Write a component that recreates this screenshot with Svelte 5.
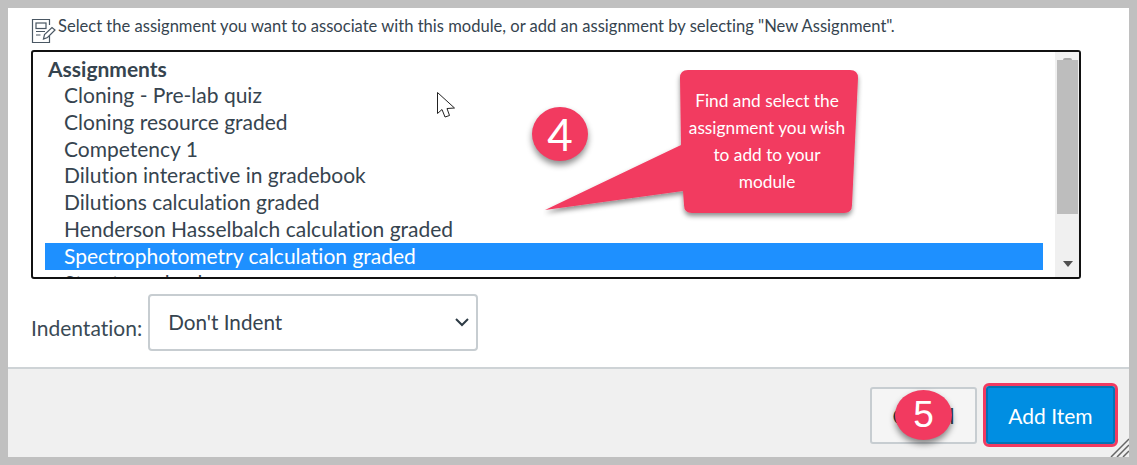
<script>
  const items = [
    'Cloning - Pre-lab quiz',
    'Cloning resource graded',
    'Competency 1',
    'Dilution interactive in gradebook',
    'Dilutions calculation graded',
    'Henderson Hasselbalch calculation graded'
  ];
</script>

<div class="frame">
  <main class="body">
    <p class="intro">
      <svg class="note" width="25" height="27" viewBox="0 0 25 27" fill="none" stroke="#4a5763" stroke-width="1.2">
        <path d="M18.500 8V2.500H1.500V25.500H18.500V19" />
        <rect x="5" y="6" width="10" height="5.500" />
        <path d="M5 14.500h9M5 18h4.500" />
        <path d="M12.500 22l1-4.500 7.500-7 3 2.500-7.500 7.500z" />
      </svg>
      <span>Select the assignment you want to associate with this module, or add an assignment by selecting "New Assignment".</span>
    </p>

    <div class="listbox">
      <div class="list">
        <div class="group">Assignments</div>
        {#each items as item}
          <div class="opt">{item}</div>
        {/each}
        <div class="opt sel">Spectrophotometry calculation graded</div>
        <div class="opt">Structure check</div>
      </div>
      <div class="scroll">
        <div class="up"></div>
        <div class="thumb"></div>
        <div class="down"></div>
      </div>
    </div>

    <div class="indent">
      <span class="lbl">Indentation:</span>
      <div class="select">
        <span>Don't Indent</span>
        <svg width="14" height="9" viewBox="0 0 14 9" fill="none" stroke="#2d3b45" stroke-width="2"><path d="M1 1l6 6 6-6" /></svg>
      </div>
    </div>
  </main>

  <footer class="foot">
    <button class="btn cancel">Cancel</button>
    <div class="focus"><button class="btn add">Add Item</button></div>
    <svg class="grip" width="20" height="20" viewBox="0 0 20 20" stroke="#666" stroke-width="1.500"><path d="M20 2L2 20M20 8L8 20M20 14L14 20" /></svg>
  </footer>

  <svg class="cursor" width="22" height="32" viewBox="0 0 22 32">
    <path d="M1.500 1.500V22.500L6 18.500L9 26L13.500 24.500L11 17.500L18.500 17Z" fill="#fff" stroke="#222" stroke-width="1" />
  </svg>

  <div class="badge four">4</div>

  <div class="callout">
    <svg width="320" height="160" viewBox="0 0 320 160">
      <defs>
        <filter id="sh" x="-10%" y="-10%" width="120%" height="125%">
          <feDropShadow dx="0" dy="3" stdDeviation="2.500" flood-color="#000" flood-opacity="0.45" />
        </filter>
      </defs>
      <path d="M137 8Q137 0 145 0H307Q315 0 315 8L309 135Q309 143 301 143H149Q141 143 141 135L140 121L2 140L138 75Z" fill="#f23a60" filter="url(#sh)" />
    </svg>
    <div class="ctext">Find and select the assignment you wish to add to your module</div>
  </div>

  <div class="badge five">5</div>
</div>

<style>
  :global(body) {
    margin: 0;
    background: #c0c0c0;
  }
  .frame {
    position: relative;
    box-sizing: border-box;
    width: 1137px;
    height: 465px;
    padding: 8px;
    display: flex;
    flex-direction: column;
    overflow: hidden;
    font-family: Lato, sans-serif;
    font-variant-ligatures: none;
    color: #36444f;
  }
  .body {
    height: 359px;
    box-sizing: border-box;
    background: #fff;
    padding: 8px 48px 0 23px;
    display: flex;
    flex-direction: column;
  }
  .intro {
    margin: 0;
    height: 34px;
    display: flex;
    align-items: flex-start;
    gap: 2px;
    font-size: 16.560px;
    line-height: 21px;
    white-space: nowrap;
  }
  .note { flex: none; margin-top: 1px; }
  .listbox {
    box-sizing: border-box;
    height: 229px;
    border: 2px solid #111;
    border-radius: 3px;
    display: flex;
    overflow: hidden;
  }
  .list {
    flex: 1;
    padding: 4px 12px 0 12px;
    overflow: hidden;
    font-size: 21px;
    line-height: 26.800px;
  }
  .group { font-weight: 700; padding-left: 3px; height: 26px; }
  .opt { padding-left: 19px; height: 26.800px; white-space: nowrap; }
  .sel { background: #1e90ff; color: #fff; }
  .scroll {
    width: 24px;
    flex: none;
    background: #f0f0f0;
    display: flex;
    flex-direction: column;
    align-items: center;
  }
  .up { height: 2px; width: 9px; margin-top: 6px; background: #a8a8a8; border-radius: 2px 2px 0 0; }
  .thumb { width: 21px; height: 154px; background: #bdbdbd; margin-left: 1px; }
  .down {
    margin-top: 47px;
    margin-left: 1px;
    width: 0;
    height: 0;
    border-left: 5.500px solid transparent;
    border-right: 5.500px solid transparent;
    border-top: 6px solid #505050;
  }
  .indent {
    margin-top: 15px;
    display: flex;
    align-items: center;
    gap: 6px;
  }
  .lbl { font-size: 21px; margin-top: 9px; color: #3a4a55; }
  .select {
    box-sizing: border-box;
    width: 330px;
    height: 57px;
    border: 2px solid #c7cdd1;
    border-radius: 4px;
    padding: 0 7px 0 18px;
    display: flex;
    align-items: center;
    justify-content: space-between;
    font-size: 20.700px;
  }
  .select span { margin-top: -2px; }
  .foot {
    position: relative;
    flex: 1;
    box-sizing: border-box;
    background: #f0f0f0;
    border-top: 2px solid #ced3d6;
    display: flex;
    justify-content: flex-end;
    align-items: center;
    gap: 6px;
    padding: 4px 11px 0 0;
  }
  .btn {
    font-family: inherit;
    font-size: 21px;
    font-variant-ligatures: none;
    border-radius: 3px;
    cursor: pointer;
  }
  .cancel {
    width: 107px;
    height: 57px;
    background: #f5f5f5;
    border: 2px solid #c7cdd1;
    color: #2d3b45;
  }
  .focus {
    border: 3px solid #f23a60;
    border-radius: 6px;
    display: flex;
  }
  .add {
    width: 129px;
    height: 58px;
    background: #008ee2;
    color: #fff;
    border: 2px solid #0374b5;
  }
  .grip { position: absolute; right: 0; bottom: 0; }
  .cursor { position: absolute; left: 436px; top: 91px; }
  .badge {
    position: absolute;
    border-radius: 50%;
    background: #f23a60;
    color: #fff;
    display: flex;
    align-items: center;
    justify-content: center;
    box-shadow: 0 4px 6px rgba(0,0,0,0.45);
    font-family: "Liberation Sans", sans-serif;
  }
  .four {
    left: 532px;
    top: 107px;
    width: 56px;
    height: 54px;
    font-size: 44px;
    font-family: Lato, sans-serif;
  }
  .five {
    left: 895px;
    top: 390px;
    width: 57px;
    height: 50px;
    font-size: 37px;
  }
  .callout {
    position: absolute;
    left: 543px;
    top: 70px;
    width: 320px;
    height: 160px;
  }
  .ctext {
    position: absolute;
    left: 144px;
    top: 17px;
    width: 160px;
    text-align: center;
    color: #fff;
    font-size: 17.300px;
    line-height: 27px;
  }
</style>
